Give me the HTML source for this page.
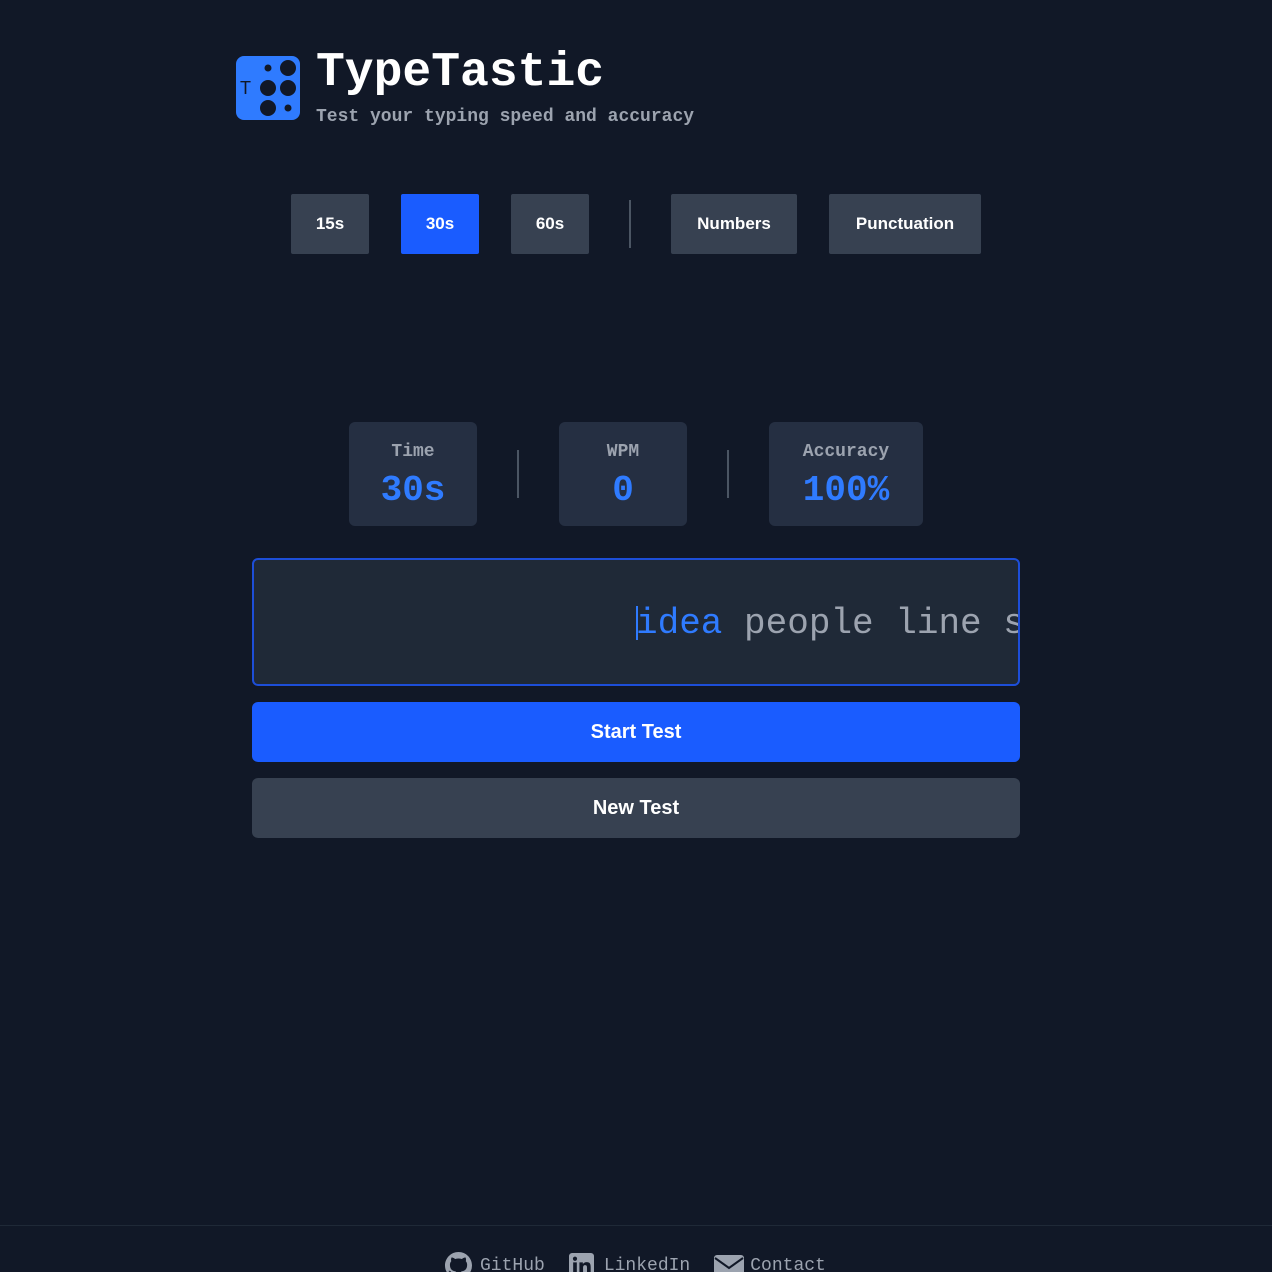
<!DOCTYPE html>
<html><head><style>
*{margin:0;padding:0;box-sizing:border-box}
html,body{width:1272px;height:1272px;overflow:hidden}
body{background:#111827;position:relative;font-family:"Liberation Sans",sans-serif}
.a{position:absolute}
.mono{font-family:"Liberation Mono",monospace}
.btn{position:absolute;top:194px;height:60px;background:#374151;color:#fff;font-weight:bold;font-size:17px;display:flex;align-items:center;justify-content:center;border-radius:2px}
.stat{position:absolute;top:422px;height:104px;background:#252f42;border-radius:6px;text-align:center;font-family:"Liberation Mono",monospace}
.stat .l{margin-top:20px;font-size:18px;color:#9ca3af;font-weight:bold;height:22px}
.stat .v{font-size:36px;color:#2f7bff;font-weight:bold;margin-top:6px}
.div{position:absolute;width:2px;background:#4b5563}
</style></head><body>
<svg class="a" style="left:236px;top:56px" width="64" height="64" viewBox="0 0 64 64">
<rect width="64" height="64" rx="8" fill="#2f7bff"/>
<text x="4" y="38" font-family="Liberation Sans" font-size="18" fill="#111827">T</text>
<circle cx="32" cy="12" r="3.5" fill="#111827"/>
<circle cx="52" cy="12" r="8" fill="#111827"/>
<circle cx="32" cy="32" r="8" fill="#111827"/>
<circle cx="52" cy="32" r="8" fill="#111827"/>
<circle cx="32" cy="52" r="8" fill="#111827"/>
<circle cx="52" cy="52" r="3.5" fill="#111827"/>
</svg>
<div class="a mono" style="left:316px;top:44px;font-size:48px;font-weight:bold;color:#fff;line-height:58px">TypeTastic</div>
<div class="a mono" style="left:316px;top:107px;font-size:18px;font-weight:bold;color:#9ca3af">Test your typing speed and accuracy</div>

<div class="btn" style="left:291px;width:78px">15s</div>
<div class="btn" style="left:401px;width:78px;background:#1a5cff">30s</div>
<div class="btn" style="left:511px;width:78px">60s</div>
<div class="div" style="left:629px;top:200px;height:48px"></div>
<div class="btn" style="left:671px;width:126px">Numbers</div>
<div class="btn" style="left:829px;width:152px">Punctuation</div>

<div class="stat" style="left:349px;width:128px"><div class="l">Time</div><div class="v">30s</div></div>
<div class="div" style="left:517px;top:450px;height:48px"></div>
<div class="stat" style="left:559px;width:128px"><div class="l">WPM</div><div class="v">0</div></div>
<div class="div" style="left:727px;top:450px;height:48px"></div>
<div class="stat" style="left:769px;width:154px"><div class="l">Accuracy</div><div class="v">100%</div></div>

<div class="a" style="left:252px;top:558px;width:768px;height:128px;background:#1f2937;border:2px solid #1d4ed8;border-radius:6px;overflow:hidden">
<div class="a" style="left:382px;top:46px;width:2px;height:34px;background:#2f7bff"></div>
<div class="a mono" style="left:382px;top:42px;font-size:36px;line-height:44px;white-space:nowrap;color:#9ca3af"><span style="color:#2f7bff">idea</span> people line some</div>
</div>

<div class="a" style="left:252px;top:702px;width:768px;height:60px;background:#1a5cff;border-radius:6px;color:#fff;font-weight:bold;font-size:20px;display:flex;align-items:center;justify-content:center">Start Test</div>
<div class="a" style="left:252px;top:778px;width:768px;height:60px;background:#374151;border-radius:6px;color:#fff;font-weight:bold;font-size:20px;display:flex;align-items:center;justify-content:center">New Test</div>

<div class="a" style="left:0;top:1225px;width:1272px;height:1px;background:#1f2937"></div>
<div class="a mono" style="left:445px;top:1252px;font-size:18px;color:#9ca3af;white-space:nowrap;display:flex;align-items:center">
<svg width="27" height="27" viewBox="0 0 16 16" style="margin-right:8px"><path fill="#9ca3af" d="M8 0C3.58 0 0 3.58 0 8c0 3.54 2.29 6.53 5.47 7.59.4.07.55-.17.55-.38 0-.19-.01-.82-.01-1.49-2.01.37-2.53-.49-2.69-.94-.09-.23-.48-.94-.82-1.13-.28-.15-.68-.52-.01-.53.63-.01 1.08.58 1.23.82.72 1.21 1.87.87 2.33.66.07-.52.28-.87.51-1.07-1.78-.2-3.64-.89-3.64-3.95 0-.87.31-1.59.82-2.15-.08-.2-.36-1.02.08-2.12 0 0 .67-.21 2.2.82.64-.18 1.32-.27 2-.27.68 0 1.36.09 2 .27 1.53-1.04 2.2-.82 2.2-.82.44 1.1.16 1.92.08 2.12.51.56.82 1.27.82 2.15 0 3.07-1.87 3.75-3.65 3.95.29.25.54.73.54 1.48 0 1.07-.01 1.93-.01 2.2 0 .21.15.46.55.38A8.013 8.013 0 0016 8c0-4.42-3.58-8-8-8z"/></svg>GitHub
<svg width="25" height="25" viewBox="0 0 24 24" style="margin:0 10px 0 24px"><rect width="24" height="24" rx="3" fill="#9ca3af"/><rect x="4" y="9" width="3.5" height="12" fill="#111827"/><circle cx="5.75" cy="5.5" r="2" fill="#111827"/><path d="M10 9h3.3v1.7c.6-1.1 1.9-2 3.7-2 3.2 0 3.8 2 3.8 4.7V21h-3.5v-6.6c0-1.4-.1-2.8-1.8-2.8s-2 1.3-2 2.7V21H10z" fill="#111827"/></svg>LinkedIn
<svg width="30" height="22" viewBox="0 0 30 22" style="margin:0 6px 0 24px"><rect width="30" height="22" rx="3" fill="#9ca3af"/><path d="M1 3l14 10 14-10" stroke="#111827" stroke-width="2" fill="none"/></svg>Contact
</div>
</body></html>
